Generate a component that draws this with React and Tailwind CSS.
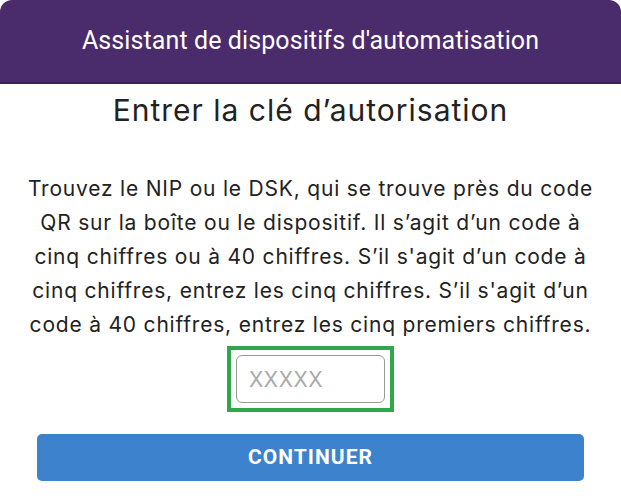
import React from 'react';

const App = () => {
  return (
    <div className="w-[621px] h-[498px] bg-white overflow-hidden" style={{ fontFamily: 'Inter, "Liberation Sans", sans-serif' }}>
      <div className="h-[84px] bg-[#4a2b6b] rounded-t-[12px] border-b-2 border-[#3a1f58] flex items-center justify-center">
        <h1 className="text-white text-[25px] tracking-[0.1px] font-['Roboto',sans-serif]">
          Assistant de dispositifs d'automatisation
        </h1>
      </div>
      <div className="flex flex-col items-center">
        <h2 className="mt-[4px] text-[30px] leading-[44px] tracking-[1px] text-[#222]">
          Entrer la clé d’autorisation
        </h2>
        <p className="mt-[40px] text-[21px] leading-[34px] tracking-[0.8px] text-[#222] text-center">
          Trouvez le NIP ou le DSK, qui se trouve près du code<br />
          QR sur la boîte ou le dispositif. Il s’agit d’un code à<br />
          cinq chiffres ou à 40 chiffres. S’il s'agit d’un code à<br />
          cinq chiffres, entrez les cinq chiffres. S’il s'agit d’un<br />
          code à 40 chiffres, entrez les cinq premiers chiffres.
        </p>
        <div className="mt-[4px] border-[4px] border-[#2ea84a] p-[5px]">
          <input
            type="text"
            placeholder="XXXXX"
            className="w-[149px] h-[48px] border border-[#999] rounded-[6px] px-[12px] text-[21px] tracking-[0.5px] text-[#222] placeholder:text-[#aaa] outline-none"
          />
        </div>
        <button className="mt-[22px] w-[547px] h-[47px] bg-[#3d82cc] rounded-[5px] text-white text-[21px] tracking-[1px] font-bold font-['Roboto',sans-serif]">
          CONTINUER
        </button>
      </div>
    </div>
  );
};

export default App;
